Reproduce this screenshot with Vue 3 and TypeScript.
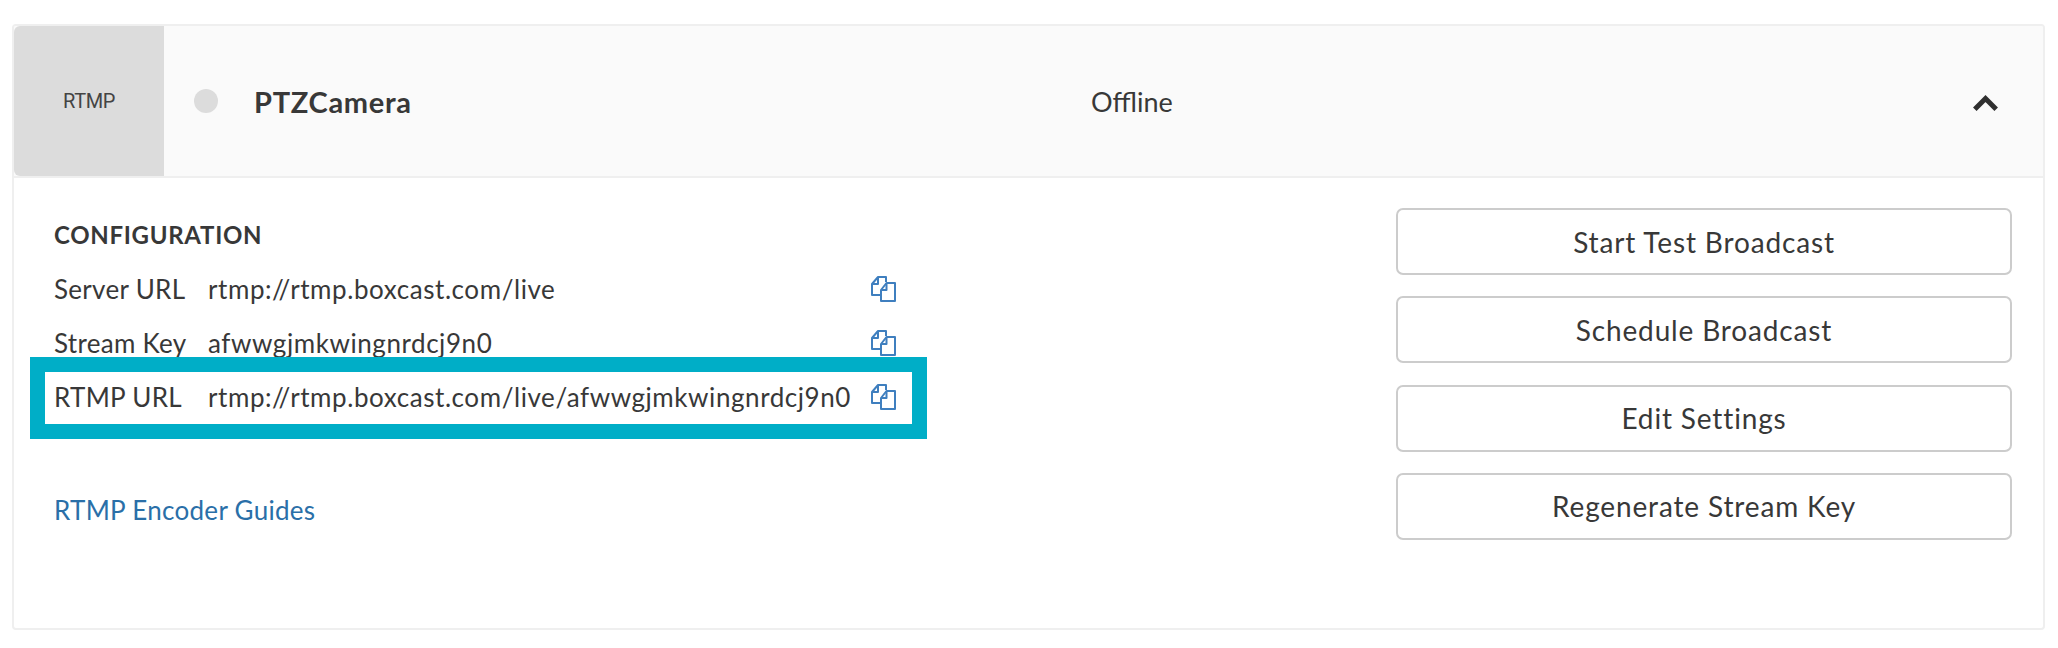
<script setup lang="ts">
interface Row { label: string; value: string; marked?: boolean }
const rows: Row[] = [
  { label: 'Server URL', value: 'rtmp://rtmp.boxcast.com/live' },
  { label: 'Stream Key', value: 'afwwgjmkwingnrdcj9n0' },
  { label: 'RTMP URL', value: 'rtmp://rtmp.boxcast.com/live/afwwgjmkwingnrdcj9n0', marked: true },
]
const actions = ['Start Test Broadcast', 'Schedule Broadcast', 'Edit Settings', 'Regenerate Stream Key']
</script>

<template>
  <div class="page">
    <section class="card">
      <header class="head">
        <div class="type">RTMP</div>
        <span class="dot"></span>
        <strong class="name">PTZCamera</strong>
        <span class="status">Offline</span>
        <svg class="chev" viewBox="0 0 25 17" width="25" height="17" aria-hidden="true">
          <path d="M1.8 14.3 12.5 3.6 23.2 14.3" fill="none" stroke="#2f2f2f" stroke-width="5" />
        </svg>
      </header>
      <div class="body">
        <div class="config">
          <h3 class="title">CONFIGURATION</h3>
          <div v-for="r in rows" :key="r.label" class="row">
            <span class="label">{{ r.label }}</span>
            <span class="value">{{ r.value }}</span>
            <svg class="copy" viewBox="0 0 25 26" width="25" height="26" aria-hidden="true">
              <g fill="none" stroke="#3f7fbf" stroke-width="2" stroke-linejoin="round">
                <path d="M15 6V1H7L1 8V19H9" />
                <path d="M7 1V8H1" />
                <path d="M15.5 7H24V25H10V14Z" />
                <path d="M15.5 7V14H10" />
              </g>
            </svg>
            <span v-if="r.marked" class="mark"></span>
          </div>
          <a class="guides" href="#">RTMP Encoder Guides</a>
        </div>
        <div class="actions">
          <button v-for="a in actions" :key="a" class="btn" type="button">{{ a }}</button>
        </div>
      </div>
    </section>
  </div>
</template>

<style>
html, body { margin: 0; background: #fff; }
</style>

<style scoped>
.page {
  padding: 24px 12px 0;
  font-family: Lato, "Open Sans", sans-serif;
  color: #383838;
}
.card {
  box-sizing: border-box;
  width: 2033px;
  height: 606px;
  border: 2px solid #efefef;
  border-radius: 4px;
  overflow: hidden;
}
.head {
  display: flex;
  align-items: center;
  height: 150px;
  background: #fafafa;
  border-bottom: 2px solid #efefef;
}
.type {
  display: flex;
  align-items: center;
  justify-content: center;
  width: 150px;
  height: 100%;
  background: #dcdcdc;
  border-radius: 6px 0 0 6px;
  font-family: Roboto, sans-serif;
  font-size: 20px;
  letter-spacing: -0.4px;
  color: #444;
}
.dot {
  width: 24px;
  height: 24px;
  margin-left: 30px;
  border-radius: 50%;
  background: #dcdcdc;
}
.name {
  margin-left: 36px;
  width: 837px;
  font-size: 29px;
  font-weight: 700;
  letter-spacing: 0.7px;
}
.status {
  font-size: 27px;
  font-weight: 400;
  flex: 1;
}
.chev { margin: 5px 45px 0 0; }
.body {
  display: flex;
  justify-content: space-between;
  padding: 30px 31px 0 40px;
}
.title {
  margin: 0;
  font-size: 24px;
  line-height: 54px;
  font-weight: 700;
  letter-spacing: 0.7px;
}
.row {
  position: relative;
  display: flex;
  align-items: center;
  height: 54px;
  font-size: 26px;
}
.label { width: 154px; flex: none; letter-spacing: 0.3px; }
.value { width: 663px; flex: none; letter-spacing: 0.57px; }
.copy { flex: none; }
.mark {
  position: absolute;
  left: -24px;
  top: -13px;
  box-sizing: border-box;
  width: 897px;
  height: 82px;
  border: 15px solid #00aec7;
  pointer-events: none;
}
.guides {
  display: block;
  margin-top: 59px;
  font-size: 26px;
  letter-spacing: 0.3px;
  line-height: 54px;
  color: #2a6fa8;
  text-decoration: none;
}
.actions {
  display: flex;
  flex-direction: column;
  gap: 21.33px;
  width: 616px;
}
.btn {
  height: 67px;
  border: 2px solid #ccc;
  border-radius: 7px;
  background: #fff;
  font: inherit;
  font-size: 28px;
  letter-spacing: 0.85px;
  color: #383838;
  padding: 0;
}
</style>
